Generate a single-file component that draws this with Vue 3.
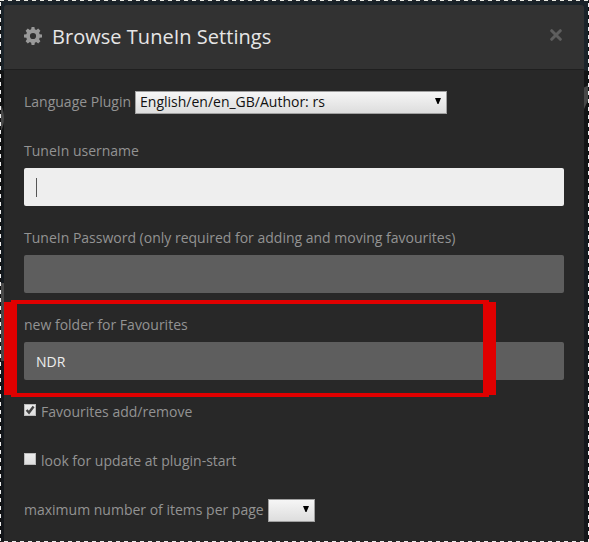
<script setup>
import { ref } from 'vue'

const language = ref('English/en/en_GB/Author: rs')
const fields = ref([
  { label: 'TuneIn username', value: '', focused: true },
  { label: 'TuneIn Password (only required for adding and moving favourites)', value: '' },
  { label: 'new folder for Favourites', value: 'NDR' },
])
const checks = ref([
  { label: 'Favourites add/remove', on: true },
  { label: 'look for update at plugin-start', on: false },
])
</script>

<template>
  <div class="page">
    <i class="blob left-top"></i>
    <i class="blob left-mid"></i>
    <i class="blob right-top"></i>
    <section class="modal">
      <header class="head">
        <svg class="gear" viewBox="0 0 18 18" width="18" height="18">
          <path
            fill="#999"
            fill-rule="evenodd"
            d="M7.6 0h2.8l.45 2.35 1.35.56L14.2 1.6l2.2 2.2-1.31 2 .56 1.35L18 7.6v2.8l-2.35.45-.56 1.35 1.31 2-2.2 2.2-2-1.31-1.35.56L10.4 18H7.6l-.45-2.35-1.35-.56-2 1.31-2.2-2.2 1.31-2-.56-1.35L0 10.4V7.6l2.35-.45.56-1.35-1.31-2 2.2-2.2 2 1.31 1.35-.56zM9 5.9a3.1 3.1 0 1 0 0 6.2 3.1 3.1 0 0 0 0-6.2z"
          />
        </svg>
        <h1 class="title">Browse TuneIn Settings</h1>
        <svg class="close" viewBox="0 0 12 12" width="12" height="12">
          <path d="M1.7 1.7L10.3 10.3M10.3 1.7L1.7 10.3" stroke="#5e5e5e" stroke-width="3" stroke-linecap="round" />
        </svg>
      </header>
      <div class="body">
        <div class="row">
          <span>Language Plugin</span>
          <div class="select wide">
            <span>{{ language }}</span>
            <svg class="arrow" viewBox="0 0 6 6" width="6" height="6"><path d="M0 0h6L3.5 6h-1z" /></svg>
          </div>
        </div>
        <div v-for="f in fields" :key="f.label" class="field">
          <div class="label">{{ f.label }}</div>
          <div class="input" :class="{ focused: f.focused }">
            <i v-if="f.focused" class="caret"></i>{{ f.value }}
          </div>
        </div>
        <div v-for="c in checks" :key="c.label" class="check-row">
          <span class="box">
            <svg v-if="c.on" viewBox="0 0 12 12" width="12" height="12">
              <path d="M2.6 6L5 8.6L9.6 2.6" fill="none" stroke="#444" stroke-width="2.4" />
            </svg>
          </span>
          <span>{{ c.label }}</span>
        </div>
        <div class="row">
          <span>maximum number of items per page</span>
          <div class="select small">
            <svg class="arrow" viewBox="0 0 6 6" width="6" height="6"><path d="M0 0h6L3.5 6h-1z" /></svg>
          </div>
        </div>
      </div>
    </section>
    <div class="marker"></div>
    <div class="dashes"></div>
  </div>
</template>

<style>
body {
  background: #161a1e;
}
</style>

<style scoped>
.page {
  position: relative;
  box-sizing: border-box;
  width: 589px;
  height: 542px;
  padding: 5px 5px 0 4px;
  overflow: hidden;
  background: linear-gradient(#1b2329 0, #1b2329 70px, #131415 71px, #131415 170px, #151a1f 240px, #14161a);
  color: #939393;
  font: 14px/20px "Open Sans", "Noto Sans", sans-serif;
}
.modal {
  position: relative;
  height: 537px;
  background: #282828;
  border-radius: 3px 3px 0 0;
}
.head {
  display: flex;
  align-items: center;
  box-sizing: border-box;
  height: 65px;
  padding: 0 22px 0 20px;
  background: #323232;
  border-bottom: 1px solid #1f1f1f;
  border-radius: 3px 3px 0 0;
}
.gear {
  margin-right: 10px;
  margin-bottom: 2px;
}
.title {
  flex: 1;
  margin: 0;
  color: #e6e6e6;
  font-size: 20px;
  line-height: 30px;
  font-weight: 400;
  letter-spacing: 0.03px;
}
.close {
  margin-bottom: 4px;
}
.body {
  display: flex;
  flex-direction: column;
  padding: 22px 20px 0;
}
.row {
  display: flex;
  align-items: center;
  gap: 4px;
  height: 20px;
  margin-bottom: 29px;
  white-space: nowrap;
}
.field {
  margin-bottom: 22px;
}
.label {
  height: 20px;
  margin-bottom: 7px;
}
.input {
  display: flex;
  align-items: center;
  box-sizing: border-box;
  height: 38px;
  padding: 2px 12px 0;
  border-radius: 2px;
  background: #5e5e5e;
  color: #eee;
}
.input.focused {
  padding-top: 0;
  background: #eee;
}
.caret {
  width: 1px;
  height: 19px;
  background: #555;
}
.select {
  display: flex;
  align-items: center;
  justify-content: space-between;
  flex: none;
  box-sizing: border-box;
  height: 23px;
  padding: 0 5px 0 4px;
  border: 1px solid #a0a0a0;
  background: linear-gradient(#f6f6f6, #ddd);
  color: #111;
}
.wide {
  width: 312px;
}
.small {
  width: 47px;
  justify-content: flex-end;
}
.arrow {
  margin-bottom: 2px;
}
.check-row {
  display: flex;
  align-items: center;
  gap: 5px;
  height: 20px;
  margin-bottom: 29px;
}
.box {
  box-sizing: border-box;
  width: 12px;
  height: 12px;
  margin-bottom: 4px;
  border-radius: 1px;
  background: linear-gradient(#eee, #ddd);
  box-shadow: inset 0 0 0 1px #bbb;
}
.box svg {
  display: block;
}
.marker {
  position: absolute;
  left: 11px;
  top: 300px;
  width: 478px;
  height: 97px;
  box-sizing: border-box;
  border: solid #e00000;
  border-width: 4px 0;
}
.marker::before,
.marker::after {
  content: "";
  position: absolute;
  top: -2px;
  width: 13px;
  height: 93px;
  background: #e00000;
}
.marker::before {
  left: -7px;
}
.marker::after {
  right: -7px;
}
.blob {
  position: absolute;
  background: #484848;
}
.left-top {
  left: -16px;
  top: 100px;
  width: 20px;
  height: 36px;
  border-radius: 50%;
}
.left-mid {
  left: 0;
  top: 283px;
  width: 4px;
  height: 78px;
}
.right-top {
  left: 584px;
  top: 85px;
  width: 5px;
  height: 24px;
  clip-path: polygon(0 10%, 100% 0, 100% 55%, 0 100%);
}
.dashes {
  position: absolute;
  inset: 0;
  background:
    repeating-linear-gradient(90deg, #e8e8e0 0 4px, #20242a 4px 8px) 0 0 / 100% 1px no-repeat,
    repeating-linear-gradient(90deg, #222 0 4px, #e8e8e8 4px 8px) 0 100% / 100% 1px no-repeat,
    repeating-linear-gradient(#111 0 2px, #eee 2px 6px, #111 6px 8px) 0 0 / 1px 100% no-repeat,
    repeating-linear-gradient(#111 0 3px, #eee 3px 7px, #111 7px 8px) 100% 0 / 1px 100% no-repeat;
}
</style>
